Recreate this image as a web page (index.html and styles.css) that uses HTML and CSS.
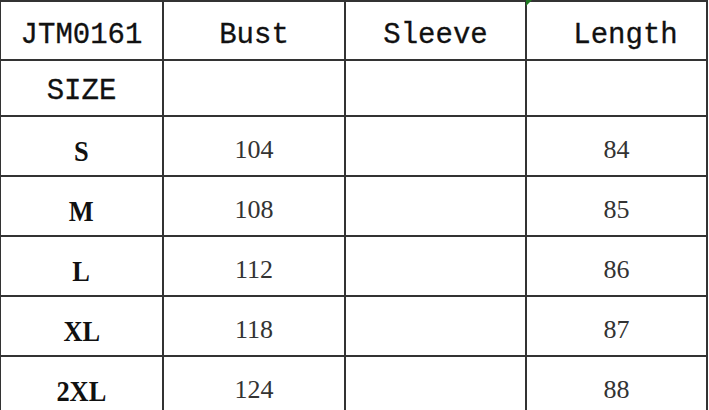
FILE: index.html
```html
<!DOCTYPE html>
<html>
<head>
<meta charset="utf-8">
<link rel="stylesheet" href="styles.css">
</head>
<body>
<div class="chart">
  <div class="cell head">JTM0161</div>
  <div class="cell head">Bust</div>
  <div class="cell head">Sleeve</div>
  <div class="cell head head-length"><span class="marker"></span>Length</div>

  <div class="cell head size-head">SIZE</div>
  <div class="cell"></div>
  <div class="cell"></div>
  <div class="cell"></div>

  <div class="cell size"><span class="label">S</span></div>
  <div class="cell num">104</div>
  <div class="cell"></div>
  <div class="cell num">84</div>

  <div class="cell size"><span class="label">M</span></div>
  <div class="cell num">108</div>
  <div class="cell"></div>
  <div class="cell num">85</div>

  <div class="cell size"><span class="label">L</span></div>
  <div class="cell num">112</div>
  <div class="cell"></div>
  <div class="cell num">86</div>

  <div class="cell size"><span class="label">XL</span></div>
  <div class="cell num">118</div>
  <div class="cell"></div>
  <div class="cell num">87</div>

  <div class="cell size"><span class="label">2XL</span></div>
  <div class="cell num">124</div>
  <div class="cell"></div>
  <div class="cell num">88</div>
</div>
</body>
</html>
```

FILE: styles.css
```css
html, body {
  margin: 0;
  padding: 0;
  background: #ffffff;
  overflow: hidden;
}

.chart {
  display: grid;
  grid-template-columns: 161px 180px 179px 179px;
  grid-template-rows: 57px 54px 58px 58px 58px 58px 58px;
  gap: 2px;
  padding: 2px 2px 0 1px;
  background: #333333;
  width: max-content;
}

.cell {
  position: relative;
  background: #ffffff;
  display: flex;
  align-items: center;
  justify-content: center;
  box-sizing: border-box;
  padding-top: 9px;
  color: #111111;
}

.head {
  font-family: "Liberation Mono", monospace;
  font-size: 29px;
  color: #111111;
  -webkit-text-stroke: 0.3px #111111;
}

.size-head {
  padding-top: 7px;
}

.head-length {
  padding-left: 18px;
}

.marker {
  position: absolute;
  top: -2px;
  left: -1px;
  width: 0;
  height: 0;
  border-top: 6px solid #1f7a22;
  border-right: 6px solid transparent;
}

.size {
  font-family: "Liberation Serif", serif;
  font-weight: bold;
  font-size: 30px;
  color: #111111;
  padding-top: 9px;
}

.label {
  display: inline-block;
  transform: scaleX(0.88);
}

.num {
  font-family: "Liberation Serif", serif;
  font-size: 26px;
  color: #333333;
  padding-top: 7px;
}
```
